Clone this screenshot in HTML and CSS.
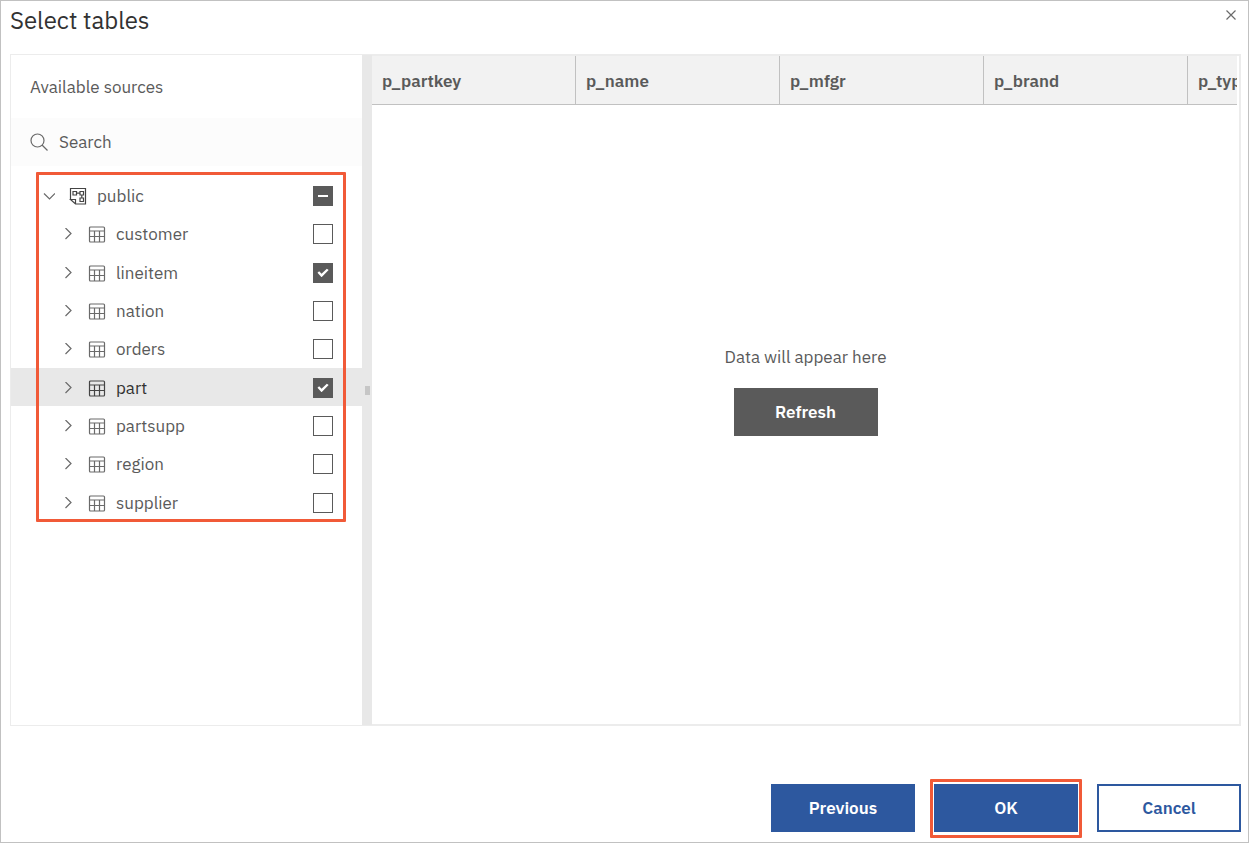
FILE: index.html
```html
<!DOCTYPE html>
<html lang="en">
<head>
    <meta charset="utf-8">
    <title>Select tables</title>
    <link rel="stylesheet" href="styles.css">
</head>
<body>
<svg class="sprite" aria-hidden="true">
    <symbol id="chevron" viewBox="0 0 12 12"><path d="M3.5 0 9 5.5 3.5 11"/></symbol>
    <symbol id="table" viewBox="0 0 18 18">
        <rect x="1.5" y="2" width="15" height="15" rx="1"/>
        <path d="M1.5 6h15M1.5 11.5h15M6.5 6v11M11.5 6v11"/>
    </symbol>
</svg>
<div class="dialog">
    <header class="title-bar">
        <h1>Select tables</h1>
        <button class="close" aria-label="Close">
            <svg width="12" height="12" viewBox="0 0 12 12"><path d="M1.5 1.5l9 9M10.5 1.5l-9 9"/></svg>
        </button>
    </header>
    <main class="panels">
        <section class="sources">
            <h2>Available sources</h2>
            <label class="search">
                <svg width="18" height="18" viewBox="0 0 18 18"><circle cx="7.5" cy="7.5" r="6.5"/><path d="M12 12l5.5 5.5"/></svg>
                <input type="search" placeholder="Search" aria-label="Search">
            </label>
            <div class="tree">
                <div class="row root">
                    <button class="toggle open" aria-label="Collapse public"><svg width="12" height="12"><use href="#chevron"/></svg></button>
                    <svg class="icon schema" width="18" height="18" viewBox="0 0 18 18">
                        <path d="M1.5 12.5V1.5h15v15.5H6.5L1.5 12.5h5V17"/>
                        <path d="M4 4.5h3.5V8H4zM11 4.5h3.5V8H11zM11 11h3.5v3.5H11zM7.5 6.2H11M12.8 8v3"/>
                    </svg>
                    <label for="public">public</label>
                    <input type="checkbox" id="public">
                </div>
                <div class="row">
                    <button class="toggle" aria-label="Expand customer"><svg width="12" height="12"><use href="#chevron"/></svg></button>
                    <svg class="icon" width="18" height="18"><use href="#table"/></svg>
                    <label for="customer">customer</label>
                    <input type="checkbox" id="customer">
                </div>
                <div class="row">
                    <button class="toggle" aria-label="Expand lineitem"><svg width="12" height="12"><use href="#chevron"/></svg></button>
                    <svg class="icon" width="18" height="18"><use href="#table"/></svg>
                    <label for="lineitem">lineitem</label>
                    <input type="checkbox" id="lineitem" checked>
                </div>
                <div class="row">
                    <button class="toggle" aria-label="Expand nation"><svg width="12" height="12"><use href="#chevron"/></svg></button>
                    <svg class="icon" width="18" height="18"><use href="#table"/></svg>
                    <label for="nation">nation</label>
                    <input type="checkbox" id="nation">
                </div>
                <div class="row">
                    <button class="toggle" aria-label="Expand orders"><svg width="12" height="12"><use href="#chevron"/></svg></button>
                    <svg class="icon" width="18" height="18"><use href="#table"/></svg>
                    <label for="orders">orders</label>
                    <input type="checkbox" id="orders">
                </div>
                <div class="row selected">
                    <button class="toggle" aria-label="Expand part"><svg width="12" height="12"><use href="#chevron"/></svg></button>
                    <svg class="icon" width="18" height="18"><use href="#table"/></svg>
                    <label for="part">part</label>
                    <input type="checkbox" id="part" checked>
                </div>
                <div class="row">
                    <button class="toggle" aria-label="Expand partsupp"><svg width="12" height="12"><use href="#chevron"/></svg></button>
                    <svg class="icon" width="18" height="18"><use href="#table"/></svg>
                    <label for="partsupp">partsupp</label>
                    <input type="checkbox" id="partsupp">
                </div>
                <div class="row">
                    <button class="toggle" aria-label="Expand region"><svg width="12" height="12"><use href="#chevron"/></svg></button>
                    <svg class="icon" width="18" height="18"><use href="#table"/></svg>
                    <label for="region">region</label>
                    <input type="checkbox" id="region">
                </div>
                <div class="row">
                    <button class="toggle" aria-label="Expand supplier"><svg width="12" height="12"><use href="#chevron"/></svg></button>
                    <svg class="icon" width="18" height="18"><use href="#table"/></svg>
                    <label for="supplier">supplier</label>
                    <input type="checkbox" id="supplier">
                </div>
            </div>
        </section>
        <div class="splitter"><span class="grip"></span></div>
        <section class="preview">
            <div class="table-wrap">
                <table>
                    <thead>
                    <tr>
                        <th>p_partkey</th>
                        <th>p_name</th>
                        <th>p_mfgr</th>
                        <th>p_brand</th>
                        <th>p_type</th>
                    </tr>
                    </thead>
                </table>
            </div>
            <div class="empty">
                <p>Data will appear here</p>
                <button class="btn dark">Refresh</button>
            </div>
        </section>
    </main>
    <footer class="actions">
        <button class="btn primary">Previous</button>
        <button class="btn primary ok">OK</button>
        <button class="btn secondary">Cancel</button>
    </footer>
</div>
<script>
    document.getElementById('public').indeterminate = true;
</script>
</body>
</html>
```
FILE: styles.css
```css
* {
    box-sizing: border-box;
}

body {
    margin: 0;
    font-family: "IBM Plex Sans", Roboto, sans-serif;
    font-size: 17px;
    line-height: 24px;
    color: #5a5a5a;
    background: #fff;
}

h1, h2, p {
    margin: 0;
    font-weight: 400;
}

button, input {
    font: inherit;
    color: inherit;
}

button {
    border: 0;
    padding: 0;
    background: none;
    cursor: pointer;
}

svg {
    display: block;
    flex: none;
    fill: none;
    stroke: #6a6a6a;
    stroke-width: 1.2;
}

.sprite {
    position: absolute;
    width: 0;
    height: 0;
}

.dialog {
    display: flex;
    flex-direction: column;
    min-height: 100vh;
    padding: 0 7px 10px 9px;
    border: 1px solid #c1c1c1;
}

/* title */
.title-bar {
    display: flex;
    justify-content: space-between;
    align-items: flex-start;
    height: 53px;
    padding-top: 3px;
}

h1 {
    font-size: 24px;
    line-height: 32px;
    color: #323232;
}

.close {
    padding: 5px 4px;
}

/* panels */
.panels {
    display: flex;
    flex: 1;
    border: 1px solid #ececec;
}

.sources {
    width: 351px;
    flex: none;
}

h2 {
    font-size: 17px;
    line-height: 24px;
    padding: 20px 19px 19px;
}

.search {
    display: flex;
    align-items: center;
    gap: 11px;
    height: 48px;
    padding: 0 19px;
    background: #fcfcfc;
}

.search input {
    flex: 1;
    min-width: 0;
    border: 0;
    padding: 0;
    background: none;
    outline: 0;
}

.search input::placeholder {
    color: #5a5a5a;
    opacity: 1;
}

.tree {
    position: relative;
    display: grid;
    grid-auto-rows: 1fr;
    min-height: 345px;
    margin-top: 10px;
}

/* highlight frame around the tree */
.tree::after {
    content: "";
    position: absolute;
    inset: -4px 16px -1px 25px;
    border: 3px solid #f15a38;
    border-radius: 1px;
    pointer-events: none;
}

.row {
    display: flex;
    align-items: center;
    padding: 2px 29px 0 51px;
}

.row.root {
    padding-left: 32px;
}

.row label {
    flex: 1;
    margin-left: 10px;
}

.selected {
    background: #e8e8e8;
    color: #323232;
}

.selected .icon, .schema {
    stroke: #444;
}

.toggle {
    margin-right: 14px;
}

.toggle.open svg {
    transform: rotate(90deg);
}

input[type="checkbox"] {
    appearance: none;
    display: grid;
    place-items: center;
    width: 20px;
    height: 20px;
    margin: 0;
    border: 1px solid #5a5a5a;
    background: #fff;
}

input[type="checkbox"]:checked,
input[type="checkbox"]:indeterminate {
    background: #5a5a5a;
}

input[type="checkbox"]:checked::before {
    content: "";
    width: 12px;
    height: 9px;
    background: #fff;
    clip-path: polygon(4% 50%, 18% 34%, 38% 60%, 82% 4%, 97% 20%, 38% 98%);
}

input[type="checkbox"]:indeterminate::before {
    content: "";
    width: 10px;
    height: 2px;
    background: #fff;
}

.splitter {
    display: flex;
    align-items: center;
    justify-content: center;
    width: 10px;
    flex: none;
    background: #e8e8e8;
}

.grip {
    width: 5px;
    height: 9px;
    background: #c6c6c6;
}

.preview {
    display: flex;
    flex-direction: column;
    flex: 1;
    min-width: 0;
    border: solid #ececec;
    border-width: 1px 1px 1px 0;
}

.table-wrap {
    overflow: hidden;
    margin-right: 2px;
}

table {
    table-layout: fixed;
    width: 1020px;
    border-collapse: separate;
    border-spacing: 0;
}

th {
    height: 49px;
    padding: 1px 10px 0;
    text-align: left;
    font-weight: 600;
    background: #f2f2f2;
    border-right: 1px solid #c1c1c1;
    border-bottom: 1px solid #c1c1c1;
}

.empty {
    display: flex;
    flex-direction: column;
    align-items: center;
    justify-content: center;
    gap: 19px;
    flex: 1;
    padding-bottom: 48px;
}

/* buttons */
.btn {
    width: 144px;
    height: 48px;
    font-weight: 600;
}

.dark {
    background: #5a5a5a;
    color: #fff;
}

.primary {
    background: #2d589f;
    color: #fff;
}

.secondary {
    border: 2px solid #2d589f;
    background: #fff;
    color: #2d589f;
}

.actions {
    display: flex;
    justify-content: flex-end;
    gap: 19px;
    padding-top: 58px;
}

.ok {
    position: relative;
}

.ok::after {
    content: "";
    position: absolute;
    inset: -5px -4px -6px;
    border: 3px solid #f15a38;
    border-radius: 1px;
}
```
